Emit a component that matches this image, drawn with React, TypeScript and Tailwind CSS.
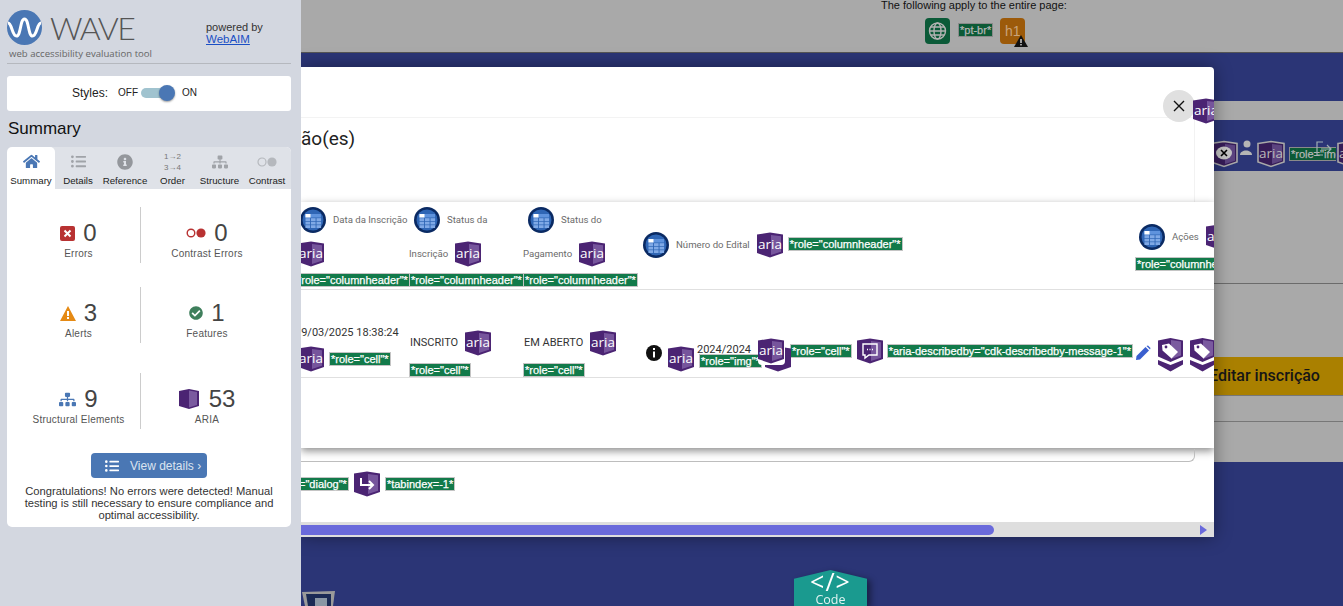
import type { ReactNode } from "react";
import {
  FaHome,
  FaListUl,
  FaInfoCircle,
  FaSitemap,
  FaCheckCircle,
} from "react-icons/fa";

const SHIELD = "M0 2.5 L13 0.5 L26 2.5 V21 L13 25.5 L0 21 Z";

function Shield({ children, dim = false }: { children?: ReactNode; dim?: boolean }) {
  return (
    <svg
      width={dim ? 30 : 26}
      height={dim ? 30 : 26}
      viewBox={dim ? "-2 -2 30 30" : "0 0 26 26"}
      className="shrink-0"
    >
      <path
        d={SHIELD}
        fill={dim ? "#361c58" : "#4b2473"}
        stroke={dim ? "#a9a9a9" : "none"}
        strokeWidth={dim ? 1.6 : 0}
      />
      <path d="M14 3 L24 4.2 V19.8 L14 23 Z" fill={dim ? "#5c4480" : "#76559c"} />
      {children}
    </svg>
  );
}

function Aria({ dim = false }: { dim?: boolean }) {
  return (
    <Shield dim={dim}>
      <text
        x="13"
        y="17"
        textAnchor="middle"
        fontSize="13.5"
        fontFamily="'Open Sans', sans-serif"
        fill={dim ? "#b9b9b9" : "#ffffff"}
      >
        aria
      </text>
    </Shield>
  );
}

function Tag({ children, dim = false }: { children: ReactNode; dim?: boolean }) {
  return (
    <span
      className={`block h-[14px] w-fit shrink-0 whitespace-nowrap border px-px font-['Liberation_Sans',sans-serif] text-[11px] leading-[12px] [-webkit-text-stroke:0.25px_currentColor] ${
        dim
          ? "border-[#8a8a8a] bg-[#0c5a36] text-[#b5b5b5]"
          : "border-[#c4c4c4] bg-[#127a4a] text-white"
      }`}
    >
      {children}
    </span>
  );
}

function TableIcon() {
  return (
    <svg width="26" height="26" viewBox="0 0 26 26" className="shrink-0">
      <circle cx="13" cy="13" r="13" fill="#0a2a63" />
      <circle cx="13" cy="13" r="10.5" fill="#2f66b5" />
      <rect x="5" y="7" width="16" height="3.5" fill="#5f93dd" />
      <rect x="5.5" y="7" width="5" height="3.5" fill="#ffffff" />
      {[11.5, 15, 18.5].map((y) =>
        [5.5, 11, 16.5].map((x) => (
          <rect key={`${x}-${y}`} x={x} y={y - 0.3} width="4.6" height="2.8" fill="#7fa9e6" />
        ))
      )}
    </svg>
  );
}

function TagShield() {
  return (
    <svg width="27" height="34" viewBox="0 0 27 34" className="shrink-0">
      <path d="M1 2.5 L13.5 0 L26 2.5 V18.5 L13.5 24 L1 18.5 Z" fill="#4b2473" />
      <path d="M14 2 L24 3.5 V17.5 L14 21 Z" fill="#7a5a9f" />
      <path d="M5 7 L12 5.5 L21 14 L14.5 20.5 L5.5 12.5 Z" fill="#ffffff" />
      <circle cx="9" cy="9" r="1.4" fill="#4b2473" />
      <path d="M1 22 L13.5 27 L26 22 V26.5 L13.5 33.5 L1 26.5 Z" fill="#4b2473" />
    </svg>
  );
}

function HeadLabel({ children }: { children: ReactNode }) {
  return (
    <span className="whitespace-nowrap font-['Roboto',sans-serif] text-[9.6px] text-[#6b6b6b]">
      {children}
    </span>
  );
}

function HeaderCell({ first, second }: { first: string; second?: string }) {
  return (
    <div className="flex flex-col pt-[5px]">
      <div className="flex h-[26px] items-center gap-[7px] pl-[5px]">
        <TableIcon />
        <HeadLabel>{first}</HeadLabel>
      </div>
      <div className={`mt-[8px] flex h-[26px] items-center gap-[7px] ${second ? "pl-0" : "pl-[3px]"}`}>
        {second && <HeadLabel>{second}</HeadLabel>}
        <Aria />
      </div>
      <div className="mt-[6px]">
        <Tag>*role="columnheader"*</Tag>
      </div>
    </div>
  );
}

function StatusCell({ label }: { label: string }) {
  return (
    <div className="flex flex-col pt-[40px]">
      <div className="flex h-[26px] items-center gap-[7px] pl-px">
        <span className="whitespace-nowrap font-['Roboto',sans-serif] text-[11px] text-[#333]">{label}</span>
        <Aria />
      </div>
      <div className="mt-[7px]">
        <Tag>*role="cell"*</Tag>
      </div>
    </div>
  );
}

function Stat({
  icon,
  value,
  label,
  divider = false,
}: {
  icon: ReactNode;
  value: number;
  label: string;
  divider?: boolean;
}) {
  return (
    <div
      className={`flex h-[56px] flex-col items-center pt-[11px] ${
        divider ? "border-r border-[#ccc] pl-[10px]" : "pr-[18px]"
      }`}
    >
      <div className="flex h-[30px] items-center gap-[8px]">
        {icon}
        <span className="text-[24px] leading-[30px] text-[#444]">{value}</span>
      </div>
      <span className="-mt-[1px] whitespace-nowrap text-[10px] leading-[13px] tracking-[0.25px] text-[#555]">
        {label}
      </span>
    </div>
  );
}

const tabs: { label: string; icon: ReactNode; active?: boolean }[] = [
  { label: "Summary", icon: <FaHome size={17} className="text-[#4a77b4]" />, active: true },
  { label: "Details", icon: <FaListUl size={15} className="text-[#a0a3a8]" /> },
  { label: "Reference", icon: <FaInfoCircle size={16} className="text-[#94979c]" /> },
  {
    label: "Order",
    icon: (
      <span className="flex flex-col font-['Liberation_Sans',sans-serif] text-[8px] leading-[11px] text-[#777]">
        <span>1→2</span>
        <span>3→4</span>
      </span>
    ),
  },
  { label: "Structure", icon: <FaSitemap size={16} className="text-[#a0a3a8]" /> },
  {
    label: "Contrast",
    icon: (
      <svg width="20" height="10" viewBox="0 0 20 10">
        <circle cx="5" cy="5" r="4" fill="none" stroke="#b5b8bd" strokeWidth="1.2" />
        <circle cx="15" cy="5" r="4.6" fill="#b5b8bd" />
      </svg>
    ),
  },
];

function Sidebar() {
  return (
    <aside className="relative z-10 h-full w-[301px] shrink-0 bg-[#d3d7e0] pr-[10px] pl-[7px] font-['Liberation_Sans',sans-serif]">
      <div className="h-[64px] border-b border-[#b5b8be]">
        <div className="flex pt-[10px]">
          <svg width="35" height="35" viewBox="0 0 35 35" className="shrink-0">
            <circle cx="17.5" cy="17.5" r="17.5" fill="#4a77b4" />
            <path
              d="M1 13 C5 13 5 26 9.5 26 C14 26 13 9 17.5 9 C22 9 21 26 25.5 26 C30 26 30 13 34 13"
              fill="none"
              stroke="#ffffff"
              strokeWidth="3"
            />
          </svg>
          <span className="ml-[8px] w-[83px] font-['Lato',sans-serif] text-[32px] leading-[35px] font-light tracking-[-1.5px] text-[#555]">
            WAVE
          </span>
          <div className="ml-[73px] pt-[11px] text-[11px] leading-[12px] text-[#333]">
            <div>powered by</div>
            <div className="text-[11.5px] text-[#1a4fc4] underline">WebAIM</div>
          </div>
        </div>
        <div className="mt-[2px] pl-[2px] font-['Open_Sans',sans-serif] text-[9.6px] leading-[14px] text-[#666]">
          web accessibility evaluation tool
        </div>
      </div>

      <div className="mt-[12px] flex h-[35px] items-center rounded-[3px] bg-white pb-[2px] pl-[65px]">
        <span className="text-[12px] text-[#222]">Styles:</span>
        <span className="ml-[10px] text-[10px] text-[#222]">OFF</span>
        <span className="relative ml-[3px] h-[10px] w-[30px] rounded-full bg-[#a0c3cf]">
          <span className="absolute top-[-3px] right-[-4px] h-[16px] w-[16px] rounded-full bg-[#4a77b4] shadow-[0_1px_2px_rgba(0,0,0,0.4)]" />
        </span>
        <span className="ml-[11px] text-[10px] text-[#222]">ON</span>
      </div>

      <h2 className="mt-[8px] ml-px text-[17px] leading-[20px] text-[#111]">Summary</h2>

      <div className="mt-[8px] h-[380px] rounded-[5px] bg-white">
        <div className="grid h-[42px] grid-cols-[48px_46px_48px_47px_47px_48px] overflow-hidden rounded-t-[5px] bg-[#dfe2e8]">
          {tabs.map((t) => (
            <div
              key={t.label}
              className={`flex flex-col items-center ${t.active ? "rounded-t-[5px] bg-white" : ""}`}
            >
              <div className="flex h-[29px] items-center">{t.icon}</div>
              <span className="text-[9.7px] leading-[10px] whitespace-nowrap text-[#222]">{t.label}</span>
            </div>
          ))}
        </div>

        <div className="mt-[18px] grid grid-cols-[134px_1fr]">
          <Stat
            divider
            value={0}
            label="Errors"
            icon={
              <svg width="15" height="15" viewBox="0 0 15 15">
                <rect width="15" height="15" rx="2" fill="#b83232" />
                <path d="M4.5 4.5 L10.5 10.5 M10.5 4.5 L4.5 10.5" stroke="#fff" strokeWidth="2" />
              </svg>
            }
          />
          <Stat
            value={0}
            label="Contrast Errors"
            icon={
              <svg width="20" height="10" viewBox="0 0 20 10">
                <circle cx="5" cy="5" r="3.8" fill="none" stroke="#b83232" strokeWidth="1.4" />
                <circle cx="15" cy="5" r="4.6" fill="#b83232" />
              </svg>
            }
          />
        </div>
        <div className="mt-[24px] grid grid-cols-[134px_1fr]">
          <Stat
            divider
            value={3}
            label="Alerts"
            icon={
              <svg width="16" height="15" viewBox="0 0 16 15">
                <path d="M8 0 L16 15 H0 Z" fill="#e58a14" />
                <rect x="7" y="5" width="2" height="5" fill="#fff" />
                <rect x="7" y="11" width="2" height="2" fill="#fff" />
              </svg>
            }
          />
          <Stat value={1} label="Features" icon={<FaCheckCircle size={14} className="text-[#3f7f5c]" />} />
        </div>
        <div className="mt-[30px] grid grid-cols-[134px_1fr]">
          <Stat
            divider
            value={9}
            label="Structural Elements"
            icon={<FaSitemap size={17} className="text-[#4a77b4]" />}
          />
          <Stat
            value={53}
            label="ARIA"
            icon={
              <svg width="20" height="20" viewBox="0 0 20 20" className="mr-[2px]">
                <path d="M0 2 L10 0 L20 2 V17 L10 20 L0 17 Z" fill="#4b2473" />
                <path d="M10 1.5 L18 3 V16 L10 18.5 Z" fill="#7a5a9f" />
              </svg>
            }
          />
        </div>

        <div className="mt-[24px] flex justify-center">
          <div className="flex h-[25px] w-[116px] items-center rounded-[4px] bg-[#4a77b4] pl-[14px] text-[12px] text-[#dbe4f0]">
            <FaListUl size={14} className="text-white" />
            <span className="ml-[11px]">View details ›</span>
          </div>
        </div>
        <p className="mt-[7px] px-[15px] text-center text-[11.2px] leading-[12px] text-[#333]">
          Congratulations! No errors were detected! Manual testing is still necessary to ensure compliance and
          optimal accessibility.
        </p>
      </div>
    </aside>
  );
}

function Backdrop() {
  return (
    <div className="flex h-full flex-col font-['Liberation_Sans',sans-serif]">
      <div className="h-[53px] border-b border-[#555] bg-[#a9a9a9] pl-[580px]">
        <div className="text-[11px] leading-[10px] whitespace-nowrap text-[#111]">
          The following apply to the entire page:
        </div>
        <div className="mt-[8px] ml-[44px] flex items-start gap-[8px]">
          <svg width="25" height="26" viewBox="0 0 25 26" className="shrink-0">
            <rect width="25" height="26" rx="4" fill="#0b5a38" />
            <g fill="none" stroke="#b3b3b3" strokeWidth="1.4">
              <circle cx="12.5" cy="13" r="8" />
              <ellipse cx="12.5" cy="13" rx="3.5" ry="8" />
              <path d="M4.5 13 H20.5 M5.5 9 H19.5 M5.5 17 H19.5" />
            </g>
          </svg>
          <span className="mt-[5px]">
            <Tag dim>*pt-br*</Tag>
          </span>
          <span className="relative -ml-px flex h-[26px] w-[25px] items-center justify-center rounded-[4px] bg-[#9c5a0a] text-[14px] text-[#c9a37a]">
            h1
            <svg width="14" height="12" viewBox="0 0 14 12" className="absolute top-[17px] left-[14px]">
              <path d="M7 0 L14 12 H0 Z" fill="#111" />
              <rect x="6.3" y="4" width="1.4" height="4" fill="#ddd" />
              <rect x="6.3" y="9" width="1.4" height="1.4" fill="#ddd" />
            </svg>
          </span>
        </div>
      </div>
      <div className="h-[48px] bg-[#2b3576]" />
      <div className="h-[19px] bg-[#a9a9a9]" />
      <div className="flex h-[51px] items-center overflow-hidden bg-[#2b3576] pt-[16px] pl-[908px]">
        <Shield dim>
          <ellipse cx="13" cy="12" rx="8" ry="6.5" fill="#c4c4c4" />
          <path d="M10 9 L16 15 M16 9 L10 15" stroke="#000" strokeWidth="1.6" />
        </Shield>
        <svg width="14" height="16" viewBox="0 0 14 16" className="mb-[12px] shrink-0">
          <circle cx="8" cy="4" r="3.5" fill="#b5b5b5" />
          <path d="M1 15 C1 9 13 9 13 15 Z" fill="#b5b5b5" />
        </svg>
        <span className="ml-[3px]">
          <Aria dim />
        </span>
        <span className="relative mt-px ml-[3px] w-[47px] shrink-0">
          <span className="block w-[47px] overflow-hidden">
            <Tag dim>*role="img"*</Tag>
          </span>
          <svg width="18" height="16" viewBox="0 0 18 16" className="absolute top-[-6px] left-[26px]">
            <path d="M8 1 H2 V14 H8 M6 8 H16 M12 4 L16 8 L12 12" fill="none" stroke="#9fb0b5" strokeWidth="1.2" />
          </svg>
        </span>
        <Aria dim />
      </div>
      <div className="h-[113px] border-b border-[#6b6b6b] bg-[#a9a9a9]" />
      <div className="h-[73px] bg-[#a9a9a9]" />
      <div className="flex h-[39px] items-center border-b border-[#777] bg-[#aa8000] pl-[908px] font-['Roboto',sans-serif] text-[16px] font-medium text-[#161616]">
        Editar inscrição
      </div>
      <div className="h-[26px] border-b border-[#777] bg-[#a9a9a9]" />
      <div className="h-[40px] bg-[#a9a9a9]" />
      <div className="flex min-h-0 flex-1 items-end overflow-hidden bg-[#2b3576]">
        <svg width="33" height="15" viewBox="0 0 33 15" className="ml-[1px] shrink-0">
          <path d="M0 1 L33 0 L31 15 H3 Z" fill="#9a9a9a" />
          <path d="M4 3 H29 V15 H6 Z" fill="#1b2a55" />
          <rect x="13" y="7" width="12" height="8" fill="#8a97a5" />
        </svg>
        <div className="ml-[459px] drop-shadow-[4px_2px_3px_rgba(0,0,0,0.4)]">
          <div className="h-[36px] w-[73px] bg-[#1a9a8f] text-center text-white [clip-path:polygon(0_24%,50%_0,100%_24%,100%_100%,0_100%)]">
            <div className="font-['Open_Sans',sans-serif] text-[25px] leading-[23px] tracking-[1px]">&lt;/&gt;</div>
            <div className="font-['Open_Sans',sans-serif] text-[12.5px] leading-[13px] text-[#e3f4f2]">Code</div>
          </div>
        </div>
      </div>
    </div>
  );
}

function Modal() {
  return (
    <div className="absolute top-[67px] left-0 flex h-[470px] w-[913px] flex-col overflow-hidden rounded-tr-[4px] bg-white font-['Liberation_Sans',sans-serif] shadow-[0_0_18px_rgba(0,0,0,0.4)]">
      <div className="h-[51px] shrink-0 border-b border-[#f3f3f3]" />
      <div className="absolute top-[23px] left-[862px] flex h-[32px] w-[32px] items-center justify-center rounded-full bg-[#e0e0e0]">
        <svg width="12" height="12" viewBox="0 0 12 12">
          <path d="M1 1 L11 11 M11 1 L1 11" stroke="#111" strokeWidth="1.4" />
        </svg>
      </div>
      <div className="absolute top-[31px] left-[892px]">
        <Aria />
      </div>

      <div className="mr-[19px] h-[84px] shrink-0 border-r border-[#f2f2f2] pt-[10px] font-['Roboto',sans-serif] text-[19px] leading-[22px] text-[#222]">
        ão(es)
      </div>

      <div className="h-[246px] shrink-0 bg-white text-[#333] shadow-[0_3px_8px_rgba(0,0,0,0.45)]">
        <div className="-ml-[6px] grid h-[88px] grid-cols-[114px_114px_115px_497px_240px] border-b border-[#e0e0e0]">
          <HeaderCell first="Data da Inscrição" />
          <HeaderCell first="Status da" second="Inscrição" />
          <HeaderCell first="Status do" second="Pagamento" />
          <div className="flex items-start gap-[7px] pt-[30px] pl-[5px]">
            <TableIcon />
            <span className="flex h-[26px] items-center">
              <HeadLabel>Número do Edital</HeadLabel>
            </span>
            <Aria />
            <span className="mt-[5px] -ml-[2px]">
              <Tag>*role="columnheader"*</Tag>
            </span>
          </div>
          <div className="flex flex-col pt-[22px]">
            <div className="flex h-[26px] items-center gap-[7px] pl-[4px]">
              <TableIcon />
              <HeadLabel>Ações</HeadLabel>
              <Aria />
            </div>
            <div className="mt-[7px]">
              <Tag>*role="columnheader"*</Tag>
            </div>
          </div>
        </div>

        <div className="-ml-[6px] grid h-[88px] grid-cols-[114px_114px_115px_497px_240px] border-b border-[#e0e0e0]">
          <div className="pt-[36px]">
            <div className="font-['Roboto',sans-serif] text-[11px] leading-[14px] whitespace-nowrap text-[#333]">
              19/03/2025 18:38:24
            </div>
            <div className="mt-[6px] flex items-center gap-[5px] pl-[3px]">
              <Aria />
              <Tag>*role="cell"*</Tag>
            </div>
          </div>
          <StatusCell label="INSCRITO" />
          <StatusCell label="EM ABERTO" />
          <div className="col-span-2 flex items-start pt-[48px] pl-[8px]">
            <svg width="16" height="16" viewBox="0 0 16 16" className="mt-[7px] shrink-0">
              <circle cx="8" cy="8" r="8" fill="#111" />
              <rect x="7" y="3" width="2" height="2" fill="#fff" />
              <rect x="7" y="6.5" width="2" height="6" fill="#fff" />
            </svg>
            <span className="mt-[8px] ml-[6px]">
              <Aria />
            </span>
            <div className="relative mt-[5px] ml-[3px] h-[26px] w-[61px] shrink-0">
              <span className="block font-['Roboto',sans-serif] text-[11px] leading-[14px] whitespace-nowrap text-[#333]">
                2024/2024
              </span>
              <span className="absolute top-[11px] left-[2px]">
                <Tag>*role="img"*</Tag>
              </span>
            </div>
            <div className="relative z-10 h-[34px] w-[33px] shrink-0">
              <svg width="26" height="26" viewBox="0 0 26 26" className="absolute top-[8px] left-[7px]">
                <path d={SHIELD} fill="#4b2473" />
              </svg>
              <span className="absolute top-0 left-0 rounded-[4px] bg-white pr-px pb-px">
                <Aria />
              </span>
            </div>
            <span className="mt-[6px] -ml-[1px]">
              <Tag>*role="cell"*</Tag>
            </span>
            <span className="ml-[5px]">
              <Shield>
                <path d="M6 6 H20 V17 H12 L8 20 V17 H6 Z" fill="none" stroke="#fff" strokeWidth="1.4" />
                <path d="M10 11.5 H11 M12.5 11.5 H13.5 M15 11.5 H16" stroke="#fff" strokeWidth="1.3" />
              </Shield>
            </span>
            <span className="mt-[6px] ml-[4px]">
              <Tag>*aria-describedby="cdk-describedby-message-1"*</Tag>
            </span>
            <svg width="16" height="16" viewBox="0 0 16 16" className="mt-[7px] ml-[2px] shrink-0">
              <path d="M1 15 L1.5 11 L10.5 2 L14 5.5 L5 14.5 Z" fill="#3a5fcf" />
              <path d="M11.5 1 L13 0.5 L15.5 3 L15 4.5 Z" fill="#3a5fcf" />
            </svg>
            <span className="ml-[6px]">
              <TagShield />
            </span>
            <span className="ml-[5px]">
              <TagShield />
            </span>
          </div>
        </div>
      </div>

      <div className="mt-[1px] mr-[19px] h-[13px] shrink-0 rounded-br-[6px] border-r border-b border-[#bdbdbd]" />

      <div className="mt-[9px] -ml-[4px] flex items-center">
        <Tag>="dialog"*</Tag>
        <span className="ml-[5px]">
          <Shield>
            <path d="M7 7 V14 H19 M15 10 L19 14 L15 18" fill="none" stroke="#fff" strokeWidth="2" />
          </Shield>
        </span>
        <span className="ml-[5px]">
          <Tag>*tabindex=-1*</Tag>
        </span>
      </div>

      <div className="mt-auto flex h-[15px] shrink-0 items-center bg-[#dedede]">
        <div className="h-[10px] w-[693px] rounded-r-[5px] bg-[#6a6adb]" />
        <svg width="7" height="10" viewBox="0 0 7 10" className="ml-[206px]">
          <path d="M0 0 L7 5 L0 10 Z" fill="#6a6adb" />
        </svg>
      </div>
    </div>
  );
}

export default function App() {
  return (
    <div className="flex h-[606px] w-[1343px] overflow-hidden bg-[#a9a9a9]">
      <Sidebar />
      <main className="relative h-full min-w-0 flex-1 overflow-hidden">
        <Backdrop />
        <Modal />
      </main>
    </div>
  );
}
